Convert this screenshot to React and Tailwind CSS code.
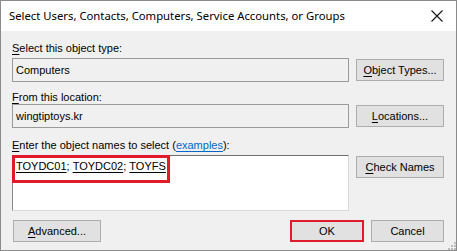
import React from "react";

const ui = { fontFamily: '"Liberation Sans", Arial, sans-serif' };

function U({ children }) {
  return <span className="underline underline-offset-[2px]">{children}</span>;
}

function Btn({ children, className = "" }) {
  return (
    <div
      className={`h-[22px] flex items-center justify-center bg-[#e1e1e1] border border-[#adadad] text-[11px] text-black ${className}`}
    >
      {children}
    </div>
  );
}

export default function App() {
  return (
    <div
      className="w-[457px] h-[251px] border border-[#8a8a8a] flex flex-col bg-[#f0f0f0] overflow-hidden"
      style={ui}
    >
      {/* Title bar */}
      <div className="h-[30px] bg-white flex items-center justify-between pl-[8px] pr-[10px] shrink-0">
        <span
          className="text-[11.3px] text-black"
          style={{ fontFamily: '"Noto Sans", "Open Sans", sans-serif' }}
        >
          Select Users, Contacts, Computers, Service Accounts, or Groups
        </span>
        <svg width="16" height="16" viewBox="0 0 16 16" className="mr-[1px]">
          <path d="M2.5 2.5 L13.5 13.5 M13.5 2.5 L2.5 13.5" stroke="#111" strokeWidth="1.1" />
        </svg>
      </div>

      {/* Body */}
      <div className="flex-1 flex flex-col pl-[11px] pr-[12px] relative">
        <div className="mt-[10px] h-[14px] leading-[14px] text-[11px] text-black">
          <U>S</U>elect this object type:
        </div>
        <div className="mt-[3px] flex items-center gap-[7px]">
          <div className="w-[337px] h-[24px] border border-[#9a9a9a] bg-[#f0f0f0] flex items-center pl-[3px] text-[11px] text-black">
            Computers
          </div>
          <Btn className="w-[88px]">
            <span>
              <U>O</U>bject Types...
            </span>
          </Btn>
        </div>

        <div className="mt-[8px] h-[14px] leading-[14px] text-[11px] text-black">
          <U>F</U>rom this location:
        </div>
        <div className="mt-[0px] flex items-center gap-[7px]">
          <div className="w-[337px] h-[24px] border border-[#9a9a9a] bg-[#f0f0f0] flex items-center pl-[3px] text-[11px] text-black">
            wingtiptoys.kr
          </div>
          <Btn className="w-[88px]">
            <span>
              <U>L</U>ocations...
            </span>
          </Btn>
        </div>

        <div className="mt-[10px] h-[14px] leading-[14px] text-[11px] text-black">
          <U>E</U>nter the object names to select (
          <span className="text-[#0066cc] underline underline-offset-[2px]">examples</span>):
        </div>
        <div className="mt-[3px] flex items-start gap-[7px]">
          <div className="relative w-[337px] h-[56px] bg-white border border-[#dadada] border-t-[#6e6e6e] border-l-[#8a8a8a]">
            <div className="absolute left-[-1px] top-[-1px] w-[158px] h-[28px] border-[3px] border-[#e21b2b]" />
            <div className="pl-[3px] pt-[5px] h-[14px] text-[11px] leading-[14px] text-black flex items-center">
              <U>TOYDC01</U>;&nbsp;<U>TOYDC02</U>;&nbsp;<U>TOYFS</U>
              <span className="inline-block w-[1px] h-[15px] bg-black ml-[2px]" />
            </div>
          </div>
          <Btn className="w-[88px] mt-[1px]">
            <span>
              <U>C</U>heck Names
            </span>
          </Btn>
        </div>

        <div className="mt-[9px] flex items-center">
          <Btn className="w-[88px] ml-[1px]">
            <span>
              <U>A</U>dvanced...
            </span>
          </Btn>
          <div className="flex-1" />
          <div className="w-[74px] h-[22px] border-[2px] border-[#e21b2b] bg-[#e1e1e1] flex items-center justify-center text-[11px] text-black">
            OK
          </div>
          <Btn className="w-[73px] ml-[7px]">Cancel</Btn>
        </div>

        {/* resize grip */}
        <svg width="9" height="9" viewBox="0 0 9 9" className="absolute right-[0px] bottom-[0px]">
          {[
            [7, 1],
            [4, 4],
            [7, 4],
            [1, 7],
            [4, 7],
            [7, 7],
          ].map(([x, y]) => (
            <rect key={`${x}-${y}`} x={x} y={y} width="2" height="2" fill="#bcbcbc" />
          ))}
        </svg>
      </div>
    </div>
  );
}
